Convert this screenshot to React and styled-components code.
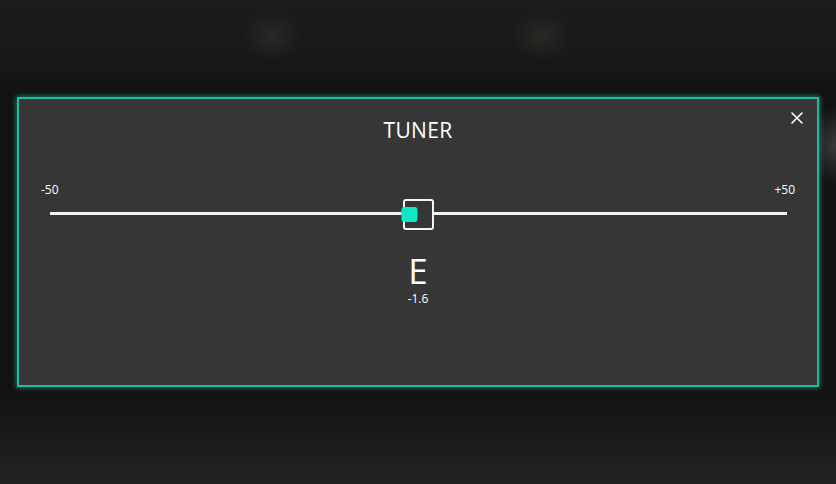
import styled, { createGlobalStyle } from "styled-components";

const Global = createGlobalStyle`
    html, body {
        margin: 0;
        padding: 0;
        background: #141414;
    }
    body {
        font-family: "Open Sans", "Noto Sans", sans-serif;
        color: #fff;
    }
`

const App = () => {
    const cents = -1.6
    const offset = cents * 5.3

    return (
        <>
            <Global />
            <Screen>
                <Modal>
                    <Header>
                        <Title>TUNER</Title>
                        <Close aria-label="close">
                            <svg width="12" height="12" viewBox="0 0 12 12">
                                <path d="M1 1 L11 11 M11 1 L1 11" stroke="#fff" strokeWidth="1.6" strokeLinecap="round" />
                            </svg>
                        </Close>
                    </Header>

                    <Scale>
                        <Label>-50</Label>
                        <Label>+50</Label>
                    </Scale>

                    <Track>
                        <Line />
                        <Target>
                            <Marker style={{ transform: `translateX(${offset}px)` }} />
                        </Target>
                    </Track>

                    <Note>E</Note>
                    <Cents>{cents}</Cents>
                </Modal>
            </Screen>
        </>
    );
}

export default App;



const Screen = styled.div `
    width: 836px;
    height: 484px;
    box-sizing: border-box;
    padding: 97px 17px 0;
    background:
        radial-gradient(ellipse 30px 40px at 836px 145px, rgba(90,90,90,0.55), transparent),
        radial-gradient(ellipse 30px 25px at 272px 36px, rgba(50,50,50,0.6), transparent),
        radial-gradient(ellipse 30px 25px at 542px 36px, rgba(52,50,45,0.6), transparent),
        linear-gradient(to bottom, #1c1c1c 0px, #181818 60px, #121212 95px, #121212 390px, #161716 420px, #212121 470px);
`

const Modal = styled.div `
    width: 802px;
    height: 290px;
    box-sizing: border-box;
    background: #363636;
    border: 2px solid #20b89e;
    box-shadow: 0 0 5px 1px rgba(30, 180, 150, 0.6);
    display: flex;
    flex-direction: column;
    align-items: center;
`

const Header = styled.div `
    position: relative;
    width: 100%;
    display: flex;
    justify-content: center;
    padding-top: 17px;
`

const Title = styled.h1 `
    margin: 0;
    font-size: 21px;
    font-weight: 400;
    line-height: 28px;
    letter-spacing: 0.3px;
`

const Close = styled.button `
    position: absolute;
    top: 13px;
    right: 14px;
    background: none;
    border: none;
    padding: 0;
    width: 12px;
    height: 12px;
    display: flex;
    cursor: pointer;
`

const Scale = styled.div `
    width: 100%;
    box-sizing: border-box;
    display: flex;
    justify-content: space-between;
    padding: 0 22px;
    margin-top: 38px;
`

const Label = styled.span `
    font-size: 12px;
    line-height: 16px;
`

const Track = styled.div `
    position: relative;
    width: 100%;
    box-sizing: border-box;
    padding: 0 31px;
    height: 32px;
    display: flex;
    align-items: center;
    justify-content: center;
`

const Line = styled.div `
    position: absolute;
    left: 31px;
    right: 30px;
    top: 14px;
    height: 3px;
    background: #f4f4f4;
`

const Target = styled.div `
    position: relative;
    width: 31px;
    height: 31px;
    box-sizing: border-box;
    border: 2px solid #f4f4f4;
    border-radius: 3px;
    background: #363636;
    display: flex;
    align-items: center;
    justify-content: center;
`

const Marker = styled.div `
    width: 16px;
    height: 15px;
    border-radius: 3px;
    background: #13e6c8;
`

const Note = styled.div `
    margin-top: 23px;
    font-size: 35px;
    line-height: 36px;
`

const Cents = styled.div `
    margin-top: 3px;
    font-size: 12px;
    line-height: 14px;
`
